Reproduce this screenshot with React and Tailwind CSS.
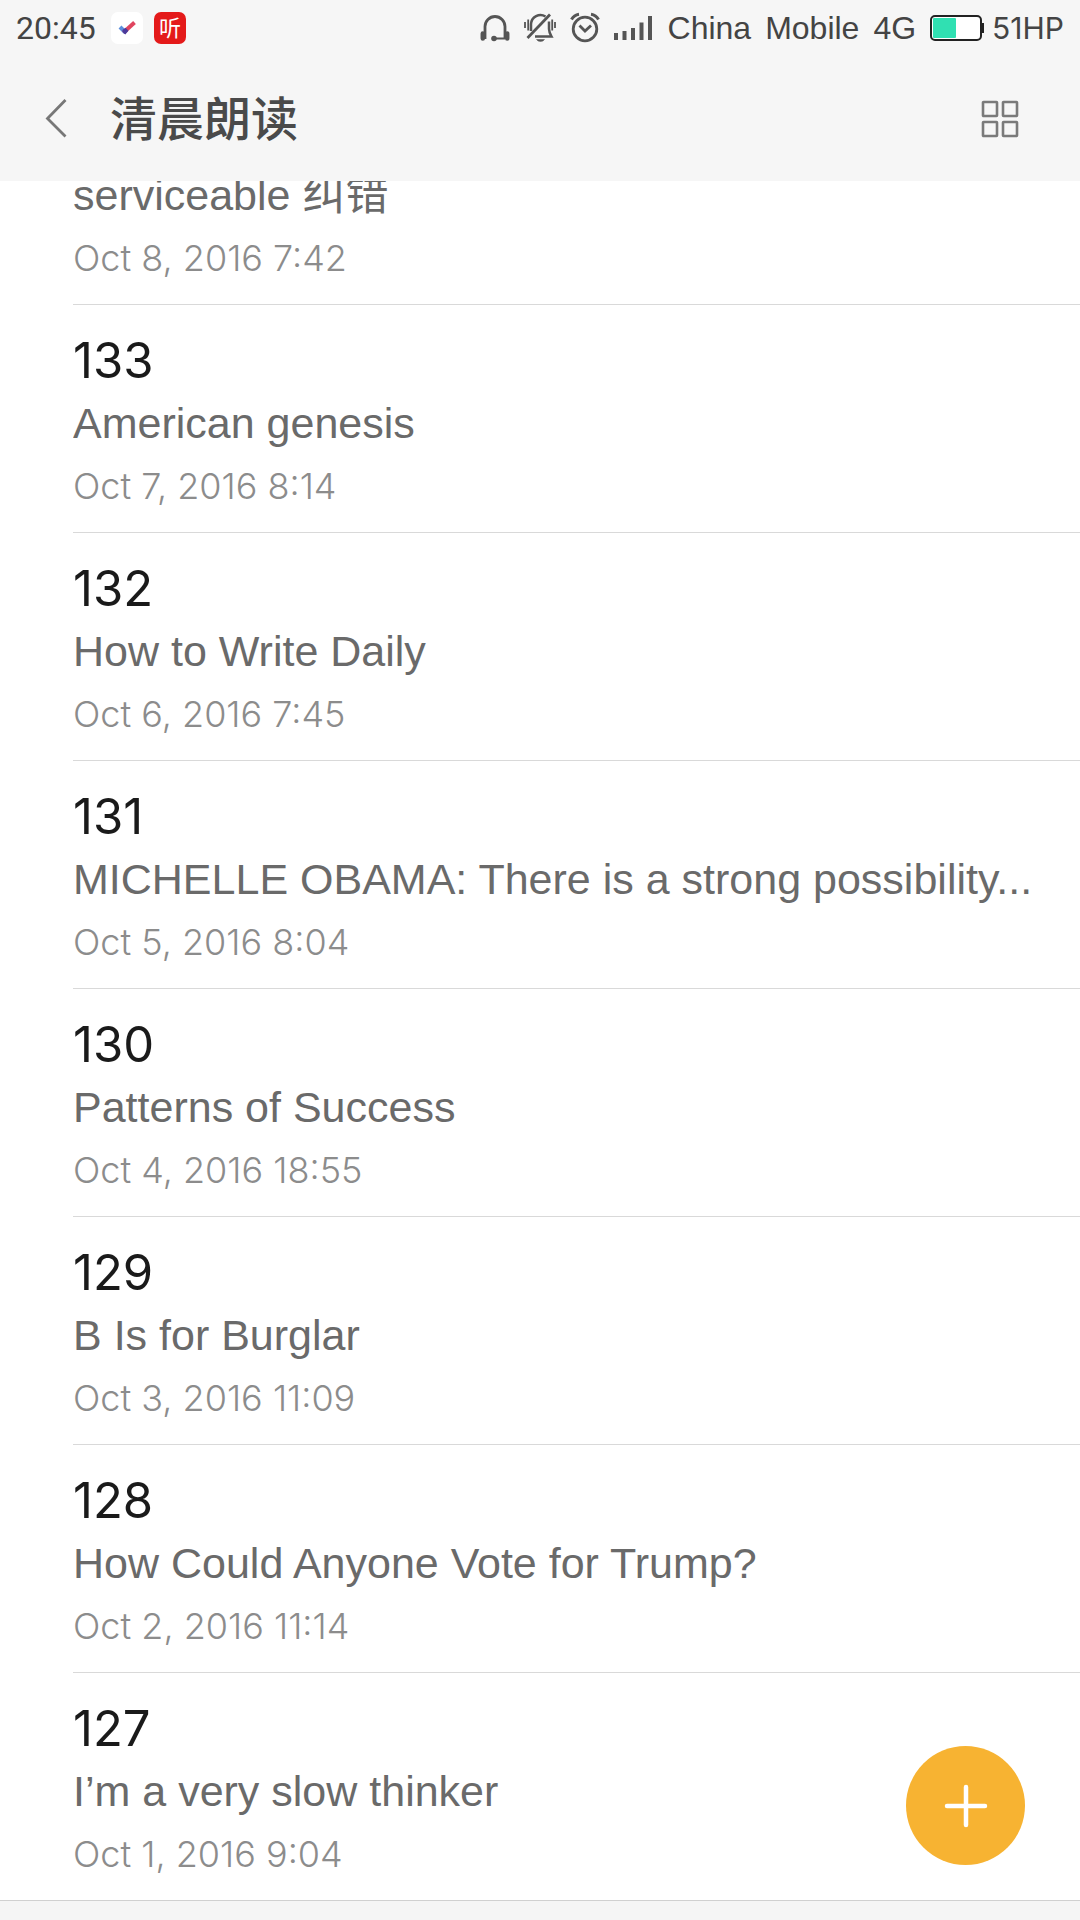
const notes = [
  { id: 1, title: null, excerpt: 'serviceable 纠错', date: 'Oct 8, 2016 7:42' },
  { id: 2, title: '133', excerpt: 'American genesis', date: 'Oct 7, 2016 8:14' },
  { id: 3, title: '132', excerpt: 'How to Write Daily', date: 'Oct 6, 2016 7:45' },
  { id: 4, title: '131', excerpt: 'MICHELLE OBAMA: There is a strong possibility...', date: 'Oct 5, 2016 8:04' },
  { id: 5, title: '130', excerpt: 'Patterns of Success', date: 'Oct 4, 2016 18:55' },
  { id: 6, title: '129', excerpt: 'B Is for Burglar', date: 'Oct 3, 2016 11:09' },
  { id: 7, title: '128', excerpt: 'How Could Anyone Vote for Trump?', date: 'Oct 2, 2016 11:14' },
  { id: 8, title: '127', excerpt: 'I’m a very slow thinker', date: 'Oct 1, 2016 9:04' },
];

function CheckAppIcon() {
  return (
    <svg className="size-8" viewBox="0 0 32 32" fill="none">
      <rect width="32" height="32" rx="7" fill="#fff" />
      <path d="M9 15 L14.500 20.500" stroke="#5b8fdc" strokeWidth="4" />
      <path d="M12.500 20.500 L23.500 10.500" stroke="#e0455f" strokeWidth="4" />
      <path d="M11.500 18 L14.500 15.800 L17.500 18.800 L14.300 22.500 L11.500 20Z" fill="#4a3a9c" />
    </svg>
  );
}

function HeadsetIcon() {
  return (
    <svg className="h-8 w-[30px]" viewBox="0 0 30 32" fill="none" stroke="#555" strokeWidth="2.800">
      <path d="M5 27V14.500a10 10 0 0 1 20 0V27" />
      <path d="M15 26.500H25" strokeWidth="2" />
      <path d="M2.800 21.500v5M27.200 21.500v5" strokeWidth="4.500" strokeLinecap="round" />
      <circle cx="14" cy="26.500" r="2.800" fill="#555" stroke="none" />
    </svg>
  );
}

function MutedBellIcon() {
  return (
    <svg className="h-8 w-8" viewBox="0 0 32 32" fill="none" stroke="#555" strokeWidth="2.500">
      <path d="M7 19V12a9.500 9.500 0 0 1 14.500-7.500" />
      <path d="M25 9.500V17q0 3 2.500 7.500H11" />
      <path d="M26 2.500L3.500 26" strokeWidth="2.800" />
      <path d="M1 10v6M4.200 7.500v11M28.200 7.500v11M31 10v6" strokeWidth="1.800" />
      <path d="M12.500 27.500h8q-1 2-4 2t-4-2z" fill="#555" strokeWidth="0.500" />
    </svg>
  );
}

function AlarmIcon() {
  return (
    <svg className="h-8 w-[30px]" viewBox="0 0 30 32" fill="none" stroke="#555" strokeWidth="2.800">
      <circle cx="15" cy="17" r="11.800" />
      <path d="M9.500 13.500L15 19l6-5.500" />
      <path d="M1.500 7.500Q4 3 9 2.300M28.500 7.500Q26 3 21 2.300" strokeWidth="3" />
    </svg>
  );
}

function SignalIcon() {
  return (
    <svg className="h-6 w-[38px]" viewBox="0 0 38 24" fill="#555">
      <rect x="0" y="17" width="4" height="7" />
      <rect x="8.500" y="15" width="4" height="9" />
      <rect x="17" y="12" width="4" height="12" />
      <rect x="25.500" y="6.500" width="4" height="17.500" />
      <rect x="34" y="0" width="4" height="24" />
    </svg>
  );
}

function BatteryIcon() {
  return (
    <svg className="h-[26px] w-[54px]" viewBox="0 0 54 26">
      <rect x="1" y="1" width="50" height="24" rx="4" fill="#fff" stroke="#222" strokeWidth="2" />
      <rect x="3" y="3" width="23" height="20" rx="1" fill="#30e0b2" />
      <rect x="51" y="8" width="3" height="10" fill="#222" />
    </svg>
  );
}

function StatusBar() {
  return (
    <div className="flex h-14 items-center justify-between px-4 text-[#444]">
      <div className="flex items-center">
        <span className="w-[95px] font-[Roboto] text-[32px]">20:45</span>
        <CheckAppIcon />
        <span className="ml-[11px] flex size-8 items-center justify-center rounded-[7px] bg-[#e41a1a] text-[22px] leading-none text-white">
          听
        </span>
      </div>
      <div className="flex items-center">
        <HeadsetIcon />
        <span className="ml-[14px]"><MutedBellIcon /></span>
        <span className="ml-[14px]"><AlarmIcon /></span>
        <span className="ml-[14px]"><SignalIcon /></span>
        <span className="ml-4 flex gap-[14px] font-['Liberation_Sans'] text-[32px]">
          <span>China</span>
          <span>Mobile</span>
          <span>4G</span>
        </span>
        <span className="ml-[14px]"><BatteryIcon /></span>
        <span className="ml-2 text-[30px]">51HP</span>
      </div>
    </div>
  );
}

function Header() {
  return (
    <header className="sticky top-0 z-10 bg-[#f6f6f6]">
      <StatusBar />
      <div className="flex h-[125px] items-center pl-9 pr-14">
        <button aria-label="Back" className="flex h-12 w-[74px] items-center">
          <svg className="h-10 w-10" viewBox="0 0 40 40" fill="none" stroke="#777" strokeWidth="2.800">
            <path d="M29.500 1L11.500 19.500L29.500 37.500" />
          </svg>
        </button>
        <h1 className="flex-1 text-[47px] font-medium leading-[60px] text-[#4a4a4a]">清晨朗读</h1>
        <button aria-label="Grid view" className="flex size-12 items-center justify-center">
          <svg className="size-10" viewBox="0 0 40 40" fill="none" stroke="#7a7a7a" strokeWidth="2.600">
            <rect x="3" y="3" width="14" height="14" rx="0.500" />
            <rect x="23" y="3" width="14" height="14" rx="0.500" />
            <rect x="3" y="23" width="14" height="14" rx="0.500" />
            <rect x="23" y="23" width="14" height="14" rx="0.500" />
          </svg>
        </button>
      </div>
    </header>
  );
}

function NoteRow({ note }) {
  return (
    <li className="border-b border-[#d9d9d9] pb-[14px] pr-10 last:border-transparent">
      {note.title && (
        <h2 className="pt-[25px] text-[49px] leading-[62px] text-[#1a1a1a]">{note.title}</h2>
      )}
      <p className="truncate font-['Liberation_Sans','Noto_Sans_CJK_SC',sans-serif] text-[43px] leading-[62px] text-[#6a6a6a]">
        {note.excerpt}
      </p>
      <p className="text-[36px] font-light leading-[64px] text-[#8c8c8c]">{note.date}</p>
    </li>
  );
}

export default function App() {
  return (
    <div className="flex min-h-screen flex-col bg-white font-[Inter,'Noto_Sans_CJK_SC',sans-serif]">
      <Header />
      <main className="-mt-[17px]">
        <ul className="pl-[73px]">
          {notes.map(note => (
            <NoteRow key={note.id} note={note} />
          ))}
        </ul>
      </main>
      <footer className="-mt-px flex-1 border-t border-[#d0d0d0] bg-[#f5f5f5]" />

      <button
        aria-label="New note"
        className="fixed bottom-[55px] right-[55px] z-20 flex size-[119px] items-center justify-center rounded-full bg-[#f7b332]"
      >
        <svg className="size-11" viewBox="0 0 44 44" stroke="#fff" strokeWidth="4.500" strokeLinecap="round">
          <path d="M22 3V41M3 22H41" />
        </svg>
      </button>
    </div>
  );
}
